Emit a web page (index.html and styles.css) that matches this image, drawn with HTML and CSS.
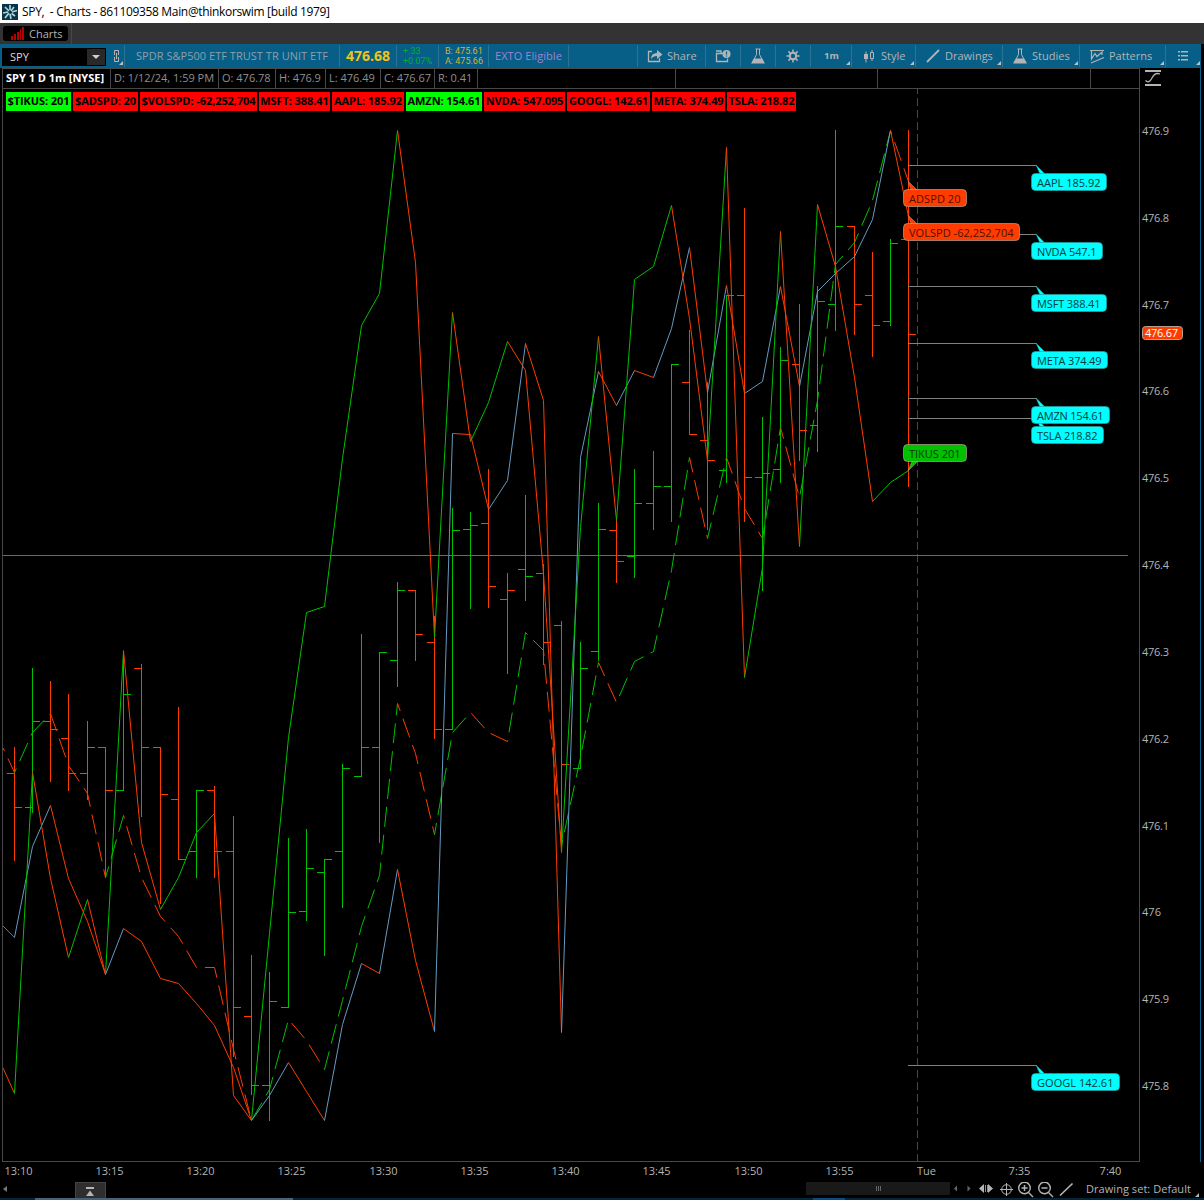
FILE: index.html
```html
<!DOCTYPE html>
<html lang="en">
<head>
    <meta charset="UTF-8">
    <title>SPY - Charts</title>
    <link rel="stylesheet" href="styles.css">
</head>
<body>
    <div class="titlebar">
        <svg class="app-icon" width="16" height="16" viewBox="0 0 16 16">
            <rect width="16" height="16" fill="#0b3346"/>
            <path d="M7 7L3 3M8 6L8 1M9 7L12 3M10 8L15 6.500M9.500 9.500L13 12M8 10L9 15M7 9L3 14M6 8L1 9" stroke="#a9d5de" stroke-width="1.7"/>
        </svg>
        <span class="window-title">SPY,&nbsp; - Charts - 861109358 Main@thinkorswim [build 1979]</span>
    </div>

    <div class="tabs">
        <div class="tab">
            <svg width="14" height="13" viewBox="0 0 14 13" fill="#b80000">
                <path d="M1 9h2v4H1zM4 7h2v6H4zM7 5h2v8H7zM10 2h1v11h-1zM12 0h2v13h-2z"/>
            </svg>
            <span>Charts</span>
        </div>
        <div class="tab-end"></div>
    </div>

    <div class="toolbar">
        <div class="symbol-box">
            <span>SPY</span>
            <span class="drop"><svg width="8" height="4"><path d="M0 0h8L4 4z" fill="#d0d0d0"/></svg></span>
        </div>
        <div class="tool link corner">
            <svg width="7" height="12" viewBox="0 0 7 12" fill="none" stroke="#b4b4b4"><path d="M1.500 5V.500H5.500V5M1.500 7V11.500H5.500V7M3.500 3v6"/></svg>
        </div>
        <div class="tool w-name"><span class="name">SPDR S&amp;P500 ETF TRUST TR UNIT ETF</span></div>
        <div class="tool w-last"><b class="last">476.68</b></div>
        <div class="tool w-chg"><div class="two up"><span>+.33</span><span>+0.07%</span></div></div>
        <div class="tool w-ba"><div class="two quote"><span>B: 475.61</span><span>A: 475.66</span></div></div>
        <div class="tool w-exto"><span class="exto">EXTO Eligible</span></div>
        <div class="tool w-blank"></div>
        <div class="tool w-share">
            <svg width="16" height="14" viewBox="0 0 16 14"><path d="M5 2.500H1.500v10h11V9" fill="none" stroke="#b4b4b4" stroke-width="1.3"/><path d="M4 10q0-6 6-6V1l5.500 4.500L10 10V7q-4 0-6 3z" fill="#b4b4b4"/></svg>
            <span>Share</span>
        </div>
        <div class="tool w-35">
            <svg width="16" height="14" viewBox="0 0 16 14"><path d="M8 4.500H1.500v8h11v-3M1 2h5v2" fill="none" stroke="#b4b4b4" stroke-width="1.3"/><circle cx="11.500" cy="5" r="4" fill="#b4b4b4"/><path d="M11.500 2.500v3M11.500 6.500v1" stroke="#075e86" stroke-width="1.200"/></svg>
        </div>
        <div class="tool w-35">
            <svg width="14" height="16" viewBox="0 0 14 16"><path d="M4.500 1h5M5.500 1v5.500L1.500 14h11L8.500 6.500V1" fill="none" stroke="#b4b4b4"/><path d="M3 10.500h8l3 5H0z" fill="#b4b4b4"/></svg>
        </div>
        <div class="tool w-35">
            <svg width="14" height="14" viewBox="0 0 14 14" fill="none" stroke="#b4b4b4"><circle cx="7" cy="7" r="3.200" stroke-width="2"/><path d="M7 .5v3M7 10.500v3M.5 7h3M10.500 7h3M2.400 2.400l2 2M9.600 9.600l2 2M11.600 2.400l-2 2M4.400 9.600l-2 2" stroke-width="1.500"/></svg>
        </div>
        <div class="tool w-1m corner"><b class="agg">1m</b></div>
        <div class="tool w-style corner">
            <svg width="12" height="14" viewBox="0 0 12 14"><path d="M1 5h4v5H1zM2.500 2.500h1v11h-1z" fill="#b4b4b4"/><path d="M7.500 3.500h3v6h-3zM9 1v2.500M9 9.500V12" fill="none" stroke="#b4b4b4"/></svg>
            <span>Style</span>
        </div>
        <div class="tool w-draw corner">
            <svg width="14" height="14" viewBox="0 0 14 14"><path d="M1 13L13 1" stroke="#b4b4b4" stroke-width="1.800"/></svg>
            <span>Drawings</span>
        </div>
        <div class="tool w-studies corner">
            <svg width="14" height="16" viewBox="0 0 14 16"><path d="M4.500 1h5M5.500 1v5.500L1.500 14h11L8.500 6.500V1" fill="none" stroke="#b4b4b4"/><path d="M3 10.500h8l3 5H0z" fill="#b4b4b4"/></svg>
            <span>Studies</span>
        </div>
        <div class="tool w-pat corner">
            <svg width="15" height="15" viewBox="0 0 15 15" fill="none" stroke="#b4b4b4" stroke-width="1.200"><path d="M0 1.500h14M1.500 2v8L5 4.500 7 7.500l5-4.500V6M1 14L14 8.500"/></svg>
            <span>Patterns</span>
        </div>
        <div class="tool w-menu corner">
            <svg width="10" height="10" viewBox="0 0 10 10" fill="#b4b4b4"><path d="M0 0h2v1.500H0zM3 0h7v1.500H3zM0 4h2v1.500H0zM3 4h7v1.500H3zM0 8h2v1.500H0zM3 8h7v1.500H3z"/></svg>
        </div>
    </div>

    <div class="workspace">
        <div class="plot">
            <div class="header">
                <span class="cell c1">SPY 1 D 1m [NYSE]</span>
                <span class="cell c2">D: 1/12/24, 1:59 PM</span>
                <span class="cell c3">O: 476.78</span>
                <span class="cell c4">H: 476.9</span>
                <span class="cell c5">L: 476.49</span>
                <span class="cell c6">C: 476.67</span>
                <span class="cell c7">R: 0.41</span>
                <span class="cell c8"></span>
                <span class="cell c9"></span>
                <span class="cell c10"></span>
            </div>
            <div class="canvas">
                <svg id="chart" width="1136" height="1072" viewBox="3 89 1136 1072"></svg>
                <div class="labels" id="labels"></div>
            </div>
        </div>
        <div class="axis">
            <svg class="fit" width="16" height="18" viewBox="0 0 16 18" fill="none" stroke="#b4b4b4"><path d="M0 2h16M0 16h16" stroke-width="2"/><path d="M.5 11.500Q4 15 7 9t8-4" stroke-width="1.300"/></svg>
            <svg id="prices" width="60" height="1072" viewBox="1140 89 60 1072"></svg>
        </div>
    </div>

    <svg id="times" class="times" width="1200" height="20" viewBox="0 1162 1200 20"></svg>

    <div class="footer">
        <svg class="f-arrow" width="4" height="6"><path d="M4 0v6L0 3z" fill="#777"/></svg>
        <div class="expand"><svg width="8" height="9"><path d="M0 0h8v2H0zM4 3.500L8 9H0z" fill="#b4b4b4"/></svg></div>
        <div class="scroll"><i></i><i></i><i></i></div>
        <svg class="icons" width="130" height="16" viewBox="950 1182 130 16" fill="none" stroke="#b4b4b4">
            <path d="M957 1185.500v6l-3-3zM967.500 1185.500v6l3-3z" fill="#666" stroke="none"/>
            <path d="M984 1184v9l-5-4.500zM988 1184v9l5-4.500z" fill="#b4b4b4" stroke="none"/><path d="M985.500 1185v7M987.500 1185v7" stroke-width=".8"/>
            <circle cx="1006.500" cy="1189.500" r="4.800"/><path d="M1006.500 1183v13M1000 1189.500h13"/>
            <circle cx="1024.500" cy="1188" r="5.800" stroke-width="1.400"/><path d="M1021.500 1188h6M1024.500 1185v6M1028.500 1192.500l4.500 4.500" stroke-width="1.400"/>
            <circle cx="1044.500" cy="1188" r="5.800" stroke-width="1.400"/><path d="M1041.500 1188h6M1048.500 1192.500l4.500 4.500" stroke-width="1.400"/>
            <path d="M1060 1195.500l12.500-12" stroke-width="1.700"/>
        </svg>
        <span class="set">Drawing set: Default</span>
        <svg class="grip" width="4" height="4"><path d="M4 0v4H0z" fill="#b4b4b4"/></svg>
    </div>
    <div class="taskbar"><span class="t1"></span><span class="t2"></span></div>

    <script src="chart.js"></script>
</body>
</html>
```
FILE: styles.css
```css
* {
    box-sizing: border-box;
}
body {
    margin: 0;
    width: 1204px;
    height: 1200px;
    overflow: hidden;
    background-color: #000;
    color: #b4b4b4;
    font-family: "Open Sans", "Noto Sans", sans-serif;
    font-size: 11px;
    line-height: 14px;
}
svg {
    display: block;
    flex: none;
}
.titlebar {
    display: flex;
    align-items: center;
    gap: 4px;
    height: 23px;
    padding-left: 2px;
    background-color: #fff;
    color: #000;
    font-size: 12px;
}
.window-title {
    letter-spacing: -0.33px;
}
.tabs {
    display: flex;
    height: 21px;
    padding-left: 3px;
    background-color: #333;
}
.tab {
    display: flex;
    align-items: center;
    gap: 5px;
    width: 65px;
    height: 15px;
    margin-top: 3px;
    padding-left: 7px;
    border-radius: 3px;
    background-color: #000;
}
.tab-end {
    width: 1px;
    height: 21px;
    margin-left: 3px;
    background-color: #484848;
}
.toolbar {
    display: flex;
    height: 24px;
    width: 1201px;
    background-color: #075e86;
}
.symbol-box {
    display: flex;
    align-items: center;
    justify-content: space-between;
    width: 104px;
    height: 18px;
    margin: 4px 0 0 2px;
    padding: 0 1px 0 8px;
    background-color: #000;
    color: #d8d8d8;
}
.drop {
    display: flex;
    align-items: center;
    justify-content: center;
    width: 18px;
    height: 16px;
    background-color: #292929;
}
.tool {
    position: relative;
    display: flex;
    align-items: center;
    gap: 4px;
    height: 22px;
    margin-top: 1px;
    border-right: 1px solid #2a7393;
    white-space: nowrap;
}
.corner::after {
    content: "";
    position: absolute;
    right: 1px;
    bottom: 2px;
    border-left: 4px solid transparent;
    border-bottom: 4px solid #c0c0c0;
}
.link {
    width: 19px;
    padding-left: 7px;
}
.w-name { width: 215px; padding-left: 11px; }
.w-last { width: 57px; padding-left: 6px; }
.w-chg { width: 42px; padding-left: 6px; }
.w-ba { width: 50px; padding-left: 6px; }
.w-exto { width: 80px; padding-left: 6px; }
.w-blank { width: 69px; }
.w-share { width: 68px; padding-left: 9px; }
.w-35 { width: 35px; justify-content: center; }
.w-1m { width: 41px; padding-left: 13px; }
.w-style { width: 64px; padding-left: 11px; gap: 6px; }
.w-draw { width: 87px; padding-left: 10px; gap: 5px; }
.w-studies { width: 77px; padding-left: 10px; gap: 5px; }
.w-pat { width: 86px; padding-left: 10px; }
.w-menu { width: 35px; padding-left: 12px; border-right: none; }
.name {
    color: #8ca0aa;
    letter-spacing: 0.03px;
}
.last {
    color: #f0c414;
    font-size: 14px;
}
.two {
    display: flex;
    flex-direction: column;
    font-family: Roboto, sans-serif;
    font-size: 9px;
    line-height: 10px;
}
.up {
    color: #00b030;
}
.quote {
    color: #d2b432;
}
.exto {
    color: #a082d2;
    letter-spacing: 0.07px;
}
.agg {
    font-size: 9.5px;
}
.workspace {
    display: flex;
    width: 1201px;
    height: 1094px;
    border-right: 1px solid #075e86;
}
.plot {
    width: 1138px;
    margin-left: 2px;
    border: 1px solid #484848;
}
.header {
    display: flex;
    height: 20px;
    border-bottom: 1px solid #484848;
    color: #8f8f8f;
}
.cell {
    padding: 2px 0 0 3px;
    border-right: 1px solid #484848;
    white-space: nowrap;
}
.c1 { width: 108px; color: #fff; font-weight: bold; }
.c2 { width: 108px; }
.c3 { width: 57px; }
.c4 { width: 50px; }
.c5 { width: 55px; }
.c6 { width: 54px; }
.c7 { width: 43px; }
.c8 { width: 198px; }
.c9 { width: 202px; }
.c10 { width: 213px; }
.canvas {
    position: relative;
    height: 1072px;
}
.labels {
    position: absolute;
    top: 3px;
    left: 3px;
    display: flex;
    gap: 2px;
}
.label {
    height: 19px;
    background-color: #f00;
    color: #000;
    font-weight: bold;
    letter-spacing: -0.08px;
    line-height: 18px;
    text-align: center;
    white-space: nowrap;
}
.label.up-day {
    background-color: #0f0;
}
.fit {
    margin: 1px 0 2px 5px;
}
.times {
    height: 20px;
}
.footer {
    display: flex;
    height: 16px;
}
.f-arrow {
    margin: 4px 0 0 3px;
}
.expand {
    width: 31px;
    height: 16px;
    margin-left: 68px;
    padding: 4px 0 0 10px;
    border: 1px solid #444;
    border-bottom: none;
    background-color: #2e2e2e;
}
.scroll {
    display: flex;
    align-items: center;
    justify-content: center;
    gap: 1px;
    width: 144px;
    height: 13px;
    margin-left: 700px;
    background-color: #191919;
}
.scroll i {
    width: 1px;
    height: 5px;
    background-color: #666;
}
.set {
    width: 106px;
    margin-left: 6px;
    letter-spacing: 0.05px;
}
.grip {
    margin: 11px 0 0 3px;
}
.taskbar {
    display: flex;
    height: 2px;
    background-color: #04263c;
}
.t1 {
    width: 258px;
    margin-left: 35px;
    background-color: #48627c;
}
.t2 {
    width: 32px;
    margin-left: 520px;
    background-color: #0a4a80;
}
```
FILE: chart.js
```js
const NS = 'http://www.w3.org/2000/svg';
const RED = '#ff3c00', GREEN = '#00c000', BLUE = '#649bc0';
const chart = document.getElementById('chart');

// x, high, low, open, close, direction, TIKUS, VOLSPD, ADSPD
const bars = [
    [14, 747, 861, 773, 807, 0, 1093, 937, 772],
    [32, 668, 813, 807, 721, 1, 772, 846, 732],
    [50, 681, 782, 721, 729, 0, 878, 805, 713],
    [68, 694, 791, 738, 773, 0, 957, 878, 765],
    [87, 721, 800, 773, 747, 1, 899, 921, 793],
    [105, 747, 878, 747, 790, 0, 974, 974, 877],
    [123, 655, 791, 790, 694, 1, 650, 928, 815],
    [141, 664, 817, 668, 747, 0, 842, 941, 877],
    [160, 747, 904, 747, 794, 0, 909, 978, 916],
    [178, 707, 860, 799, 859, 0, 877, 983, 936],
    [196, 790, 878, 851, 790, 1, 832, 1003, 967],
    [214, 786, 878, 790, 851, 0, 813, 1025, 967],
    [233, 816, 1057, 851, 1007, 0, 1095, 1067, 1049],
    [251, 955, 1095, 1016, 1085, 0, 1120, 1120, 1120],
    [269, 972, 1121, 1085, 1001, 1, 933, 1095, 1089],
    [288, 838, 1008, 1007, 912, 1, 737, 1062, 1019],
    [306, 829, 921, 911, 868, 1, 612, 1091, 1040],
    [324, 859, 956, 872, 859, 1, 606, 1120, 1069],
    [342, 764, 908, 851, 768, 1, 458, 1024, 1000],
    [361, 634, 777, 776, 747, 1, 325, 963, 926],
    [379, 652, 843, 747, 652, 1, 293, 973, 875],
    [397, 582, 687, 660, 590, 1, 130, 869, 703],
    [415, 590, 661, 590, 634, 0, 262, 960, 753],
    [434, 616, 739, 642, 729, 0, 637, 1031, 834],
    [452, 508, 730, 729, 530, 1, 312, 433, 732],
    [470, 512, 609, 529, 525, 1, 441, 434, 712],
    [488, 469, 608, 523, 586, 0, 402, 509, 732],
    [507, 573, 674, 599, 590, 0, 341, 480, 741],
    [525, 495, 601, 569, 576, 1, 370, 343, 632],
    [543, 564, 665, 573, 642, 0, 573, 400, 650],
    [561, 621, 842, 625, 764, 0, 852, 1032, 845],
    [580, 642, 769, 768, 668, 1, 527, 457, 757],
    [598, 503, 661, 651, 529, 1, 336, 371, 662],
    [616, 520, 583, 530, 561, 0, 520, 405, 702],
    [634, 469, 578, 556, 503, 1, 279, 370, 661],
    [653, 451, 530, 503, 486, 1, 266, 377, 651],
    [671, 364, 522, 486, 364, 1, 205, 328, 570],
    [689, 330, 435, 382, 434, 0, 318, 247, 457],
    [707, 382, 530, 440, 460, 0, 460, 392, 538],
    [726, 295, 483, 470, 295, 1, 147, 285, 457],
    [744, 208, 522, 295, 477, 0, 677, 393, 508],
    [762, 417, 591, 477, 473, 1, 567, 381, 538],
    [780, 347, 483, 469, 360, 1, 231, 286, 427],
    [799, 304, 461, 364, 430, 0, 546, 386, 497],
    [817, 286, 452, 425, 301, 1, 204, 291, 400],
    [835, 130, 331, 304, 226, 1, 266, 273, 264],
    [854, 226, 335, 226, 304, 0, 377, 256, 242],
    [872, 252, 357, 295, 325, 0, 501, 219, 200],
    [890, 239, 326, 321, 243, 1, 482, 130, 130],
    [908, 130, 487, 239, 334, 0, 470, 216, 181]
];

function add(parent, tag, attrs, text) {
    const el = document.createElementNS(NS, tag);
    for (const key in attrs) el.setAttribute(key, attrs[key]);
    if (text) el.textContent = text;
    parent.appendChild(el);
    return el;
}

function line(x1, y1, x2, y2, stroke, extra) {
    add(chart, 'line', Object.assign({ x1, y1, x2, y2, stroke }, extra));
}

// next session divider and previous close
line(917.5, 89, 917.5, 1161, '#484848', { 'stroke-dasharray': '8 4', 'stroke-dashoffset': 3 });
line(3, 555.5, 1128, 555.5, '#69696f');

bars.forEach(b => {
    const [x, high, low, open, close, up] = b;
    const color = up ? GREEN : RED;
    line(x + .5, high, x + .5, low, color);
    line(x - 7, open + .5, x, open + .5, color);
    line(x, close + .5, x + 8, close + .5, color);
});

function study(startY, column, upColor, dashed) {
    let px = 3, py = startY, length = 16.5;
    bars.forEach(b => {
        const x = b[0] + .5, y = b[column] + .5;
        const extra = dashed ? { 'stroke-dasharray': '20 8', 'stroke-dashoffset': length } : {};
        line(px, py, x, y, y < py ? upColor : RED, extra);
        length += Math.hypot(x - px, y - py);
        px = x;
        py = y;
    });
}
study(748, 8, GREEN, true);
study(926, 7, BLUE, false);
study(1068, 6, GREEN, false);

// comparison symbols: text, line y, bubble width
[
    ['AAPL 185.92', 165, 76],
    ['NVDA 547.1', 234, 72],
    ['MSFT 388.41', 286, 76],
    ['META 374.49', 343, 77],
    ['TSLA 218.82', 418, 73],
    ['AMZN 154.61', 398, 79],
    ['GOOGL 142.61', 1065, 89]
].forEach(([text, y, w]) => {
    line(908, y + .5, 1037, y + .5, '#808080');
    bubble(text, 1031, y + 8, w, '#00ffff', '#003c3c', [1036, y, 1040, y + 9, 1045, y + 9]);
});
bubble('ADSPD 20', 903, 189, 64, RED, '#501000', [908, 181, 911, 190, 917, 190]);
bubble('VOLSPD -62,252,704', 903, 223, 117, RED, '#501000', [908, 215, 911, 224, 917, 224]);
bubble('TIKUS 201', 903, 444, 64, GREEN, '#003c00', [908, 471, 912, 461, 918, 461]);

function bubble(text, x, y, w, fill, color, tip) {
    const edge = fill === '#00ffff' ? '#28a0a0' : '#b4a08c';
    add(chart, 'polygon', { points: tip.join(' '), fill, stroke: edge, 'stroke-width': .5 });
    add(chart, 'rect', { x: x + .5, y: y + .5, width: w - 1, height: 17, rx: 4, fill, stroke: edge, 'stroke-width': .7 });
    add(chart, 'text', { x: x + 6, y: y + 14, fill: color, 'font-size': 11, textLength: w - 12.5 }, text);
}

const prices = document.getElementById('prices');
['476.9', '476.8', '476.7', '476.6', '476.5', '476.4', '476.3', '476.2', '476.1', '476', '475.9', '475.8'].forEach((p, i) => {
    add(prices, 'text', { x: 1142, y: Math.round(135 + i * 86.82), fill: '#b4b4b4', 'font-size': 11, textLength: p.length > 3 ? 27 : 19 }, p);
});
add(prices, 'rect', { x: 1142.5, y: 326.5, width: 40, height: 13, rx: 3, fill: RED, stroke: '#b4a08c' });
add(prices, 'text', { x: 1145, y: 337, fill: '#fff', 'font-size': 11, textLength: 33 }, '476.67');

const times = document.getElementById('times');
[
    ['13:10', 19], ['13:15', 110], ['13:20', 201], ['13:25', 292], ['13:30', 384], ['13:35', 475], ['13:40', 566],
    ['13:45', 657], ['13:50', 749], ['13:55', 840], ['Tue', 927], ['7:35', 1020], ['7:40', 1111]
].forEach(([t, x]) => {
    add(times, 'text', { x: x - .5, y: 1175, fill: '#b4b4b4', 'font-size': 11, 'text-anchor': 'middle' }, t);
});

// symbol, width, up on the day
[
    ['$TIKUS: 201', 65, 1], ['$ADSPD: 20', 65], ['$VOLSPD: -62,252,704', 117], ['MSFT: 388.41', 71], ['AAPL: 185.92', 72],
    ['AMZN: 154.61', 76, 1], ['NVDA: 547.095', 81], ['GOOGL: 142.61', 83], ['META: 374.49', 73], ['TSLA: 218.82', 69]
].forEach(([text, width, up]) => {
    const div = document.createElement('div');
    div.className = up ? 'label up-day' : 'label';
    div.style.width = width + 'px';
    div.textContent = text;
    document.getElementById('labels').appendChild(div);
});
```
